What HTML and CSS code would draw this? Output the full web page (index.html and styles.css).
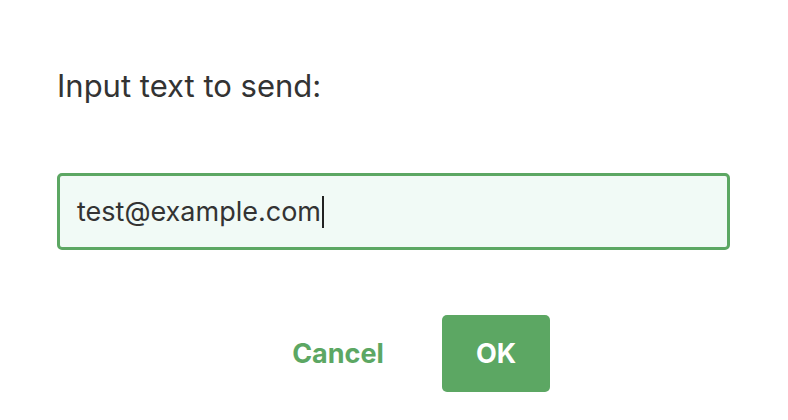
FILE: index.html
```html
<html>
    <head>
        <title>Send text</title>
        <link rel="stylesheet" href="styles.css">
    </head>

    <body>
        <main class="prompt">
            <p class="prompt-label">Input text to send:</p>
            <div class="prompt-field">
                <span class="prompt-value">test@example.com</span><span class="caret"></span>
            </div>
            <div class="prompt-actions">
                <button class="btn btn-cancel" type="button">Cancel</button>
                <button class="btn btn-ok" type="submit">OK</button>
            </div>
        </main>
    </body>
</html>
```

FILE: styles.css
```css
/* Page base */
body {
    margin: 0;
    background: #ffffff;
    font-family: Inter, "Noto Sans", "Liberation Sans", sans-serif;
    color: #333333;
}

/* Dialog body */
.prompt {
    padding: 66px 58px 0 57px;
}

/* Question above the field */
.prompt-label {
    margin: 0;
    font-size: 31px;
    line-height: 40px;
}

/* Text field (focused) */
.prompt-field {
    display: flex;
    align-items: center;
    height: 71px;
    margin-top: 67px;
    padding: 0 17px;
    border: 3px solid #5ca763;
    border-radius: 5px;
    background-color: #f1faf6;
    font-size: 27px;
}

.caret {
    display: inline-block;
    width: 2px;
    height: 32px;
    margin-left: 1px;
    background-color: #222222;
}

/* Buttons row */
.prompt-actions {
    display: flex;
    justify-content: center;
    gap: 24px;
    margin-top: 65px;
    padding-left: 21px;
}

.btn {
    height: 77px;
    padding: 0 34px;
    border: none;
    border-radius: 5px;
    font-family: inherit;
    font-size: 27px;
    font-weight: 700;
}

.btn-cancel {
    background: none;
    color: #5ca763;
}

.btn-ok {
    width: 108px;
    background-color: #5ca763;
    color: #ffffff;
}
```
